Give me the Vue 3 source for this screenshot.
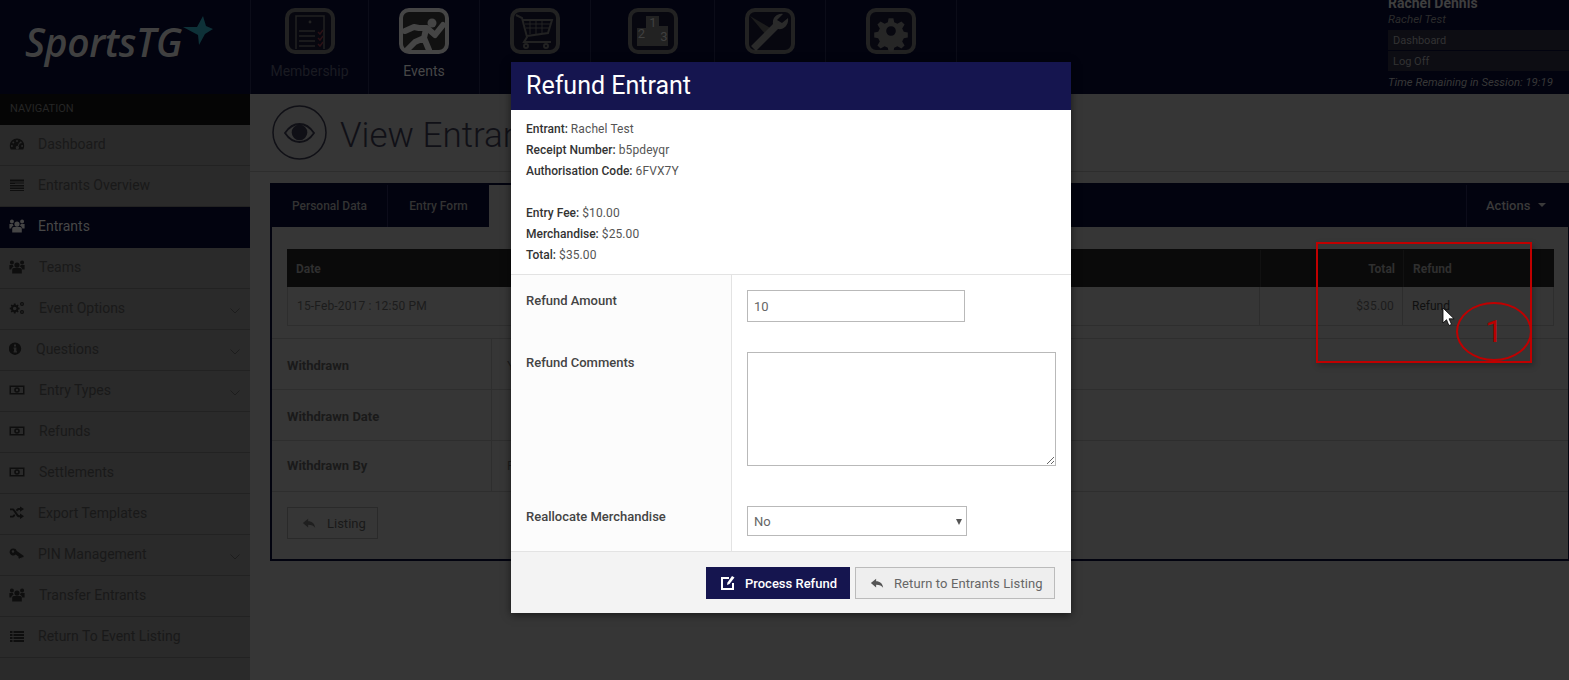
<script setup>
const topNav = [
  { key: 'membership', label: 'Membership', width: 118 },
  { key: 'events', label: 'Events', width: 111 },
  { key: 'cart', label: '', width: 111 },
  { key: 'podium', label: '', width: 124 },
  { key: 'wrench', label: '', width: 111 },
  { key: 'gear', label: '', width: 131 }
]
const icons = {
  gauge: 'M8 2.5a7.2 7.2 0 0 0-7.2 7.2c0 1.4.4 2.7 1 3.8h12.4c.6-1.1 1-2.4 1-3.8A7.2 7.2 0 0 0 8 2.5zM8 4a1 1 0 1 1 0 2 1 1 0 0 1 0-2zM4.3 5.5a1 1 0 1 1 0 2 1 1 0 0 1 0-2zM11.7 5.5a1 1 0 1 1 0 2 1 1 0 0 1 0-2zM2.9 9a1 1 0 1 1 0 2 1 1 0 0 1 0-2zM13.1 9a1 1 0 1 1 0 2 1 1 0 0 1 0-2zM10.2 6.6l.8.4-1.6 3.4a1.6 1.6 0 1 1-.8-.4z',
  overview: 'M1 2.5h14v2H1zM1 5.5h14v1H6v.5H1zM1 8h14v1.5H1zM1 10.5h14v1.5H1zM1 13h14v1H1z',
  users: 'M8 3.5a2.600 2.600 0 1 1 0 5.200 2.600 2.600 0 0 1 0-5.200zM2.900 1.500a2 2 0 1 1 0 4 2 2 0 0 1 0-4zM13.100 1.500a2 2 0 1 1 0 4 2 2 0 0 1 0-4zM4.800 9h6.400c.9 0 1.600.8 1.600 1.700v3.800H3.200v-3.800C3.200 9.800 3.900 9 4.800 9zM.4 6h3.400c.1.700.4 1.300.9 1.800-1.300.3-2.400 1.300-2.500 2.700H.4zM12.200 6h3.400v4.500h-2.300c-.1-1.400-1.200-2.400-2.500-2.700.5-.5.800-1.100.9-1.800z',
  cogs: 'M5.5 3.5l1 .1.3 1.300.8.4 1.200-.7.8.8-.7 1.200.4.8 1.300.3v1.600l-1.300.3-.4.8.7 1.200-.8.8-1.200-.7-.8.4-.3 1.300H4.900l-.3-1.300-.8-.4-1.200.7-.8-.8.7-1.200-.4-.8L.8 9.300V7.700l1.300-.3.4-.8-.7-1.200.8-.8 1.200.7.8-.4.3-1.300zM5.700 6.700a1.800 1.800 0 1 0 0 3.600 1.800 1.800 0 0 0 0-3.600zM13 2a2 2 0 1 1 0 4 2 2 0 0 1 0-4zM13 3.200a.8.800 0 1 0 0 1.600.8.800 0 0 0 0-1.600zM13 10a2 2 0 1 1 0 4 2 2 0 0 1 0-4zM13 11.200a.8.800 0 1 0 0 1.600.8.800 0 0 0 0-1.600z',
  info: 'M6 1.500a6.200 6.200 0 1 1 0 12.400 6.200 6.200 0 0 1 0-12.400zM5 3.500v2h2v-2zM4.500 6.500v1.200H5v2.600h-.5v1.200H8v-1.200h-.6v-3.800z',
  money: 'M.5 3.500h15v9H.5zM2 5v6h12V5zM8 5.200a2.800 2.800 0 1 1 0 5.600 2.800 2.800 0 0 1 0-5.600zM8 6.800a1.200 1.200 0 1 0 0 2.400 1.200 1.200 0 0 0 0-2.400z',
  shuffle: 'M1 3.500h2.500c1 0 1.600.5 2.200 1.300l3.400 4.700c.4.5.7.7 1.300.7H11V8.500l4 2.700-4 2.800v-1.700h-.8c-1.200 0-1.900-.5-2.500-1.400L4.300 6c-.3-.5-.5-.7-1-.7H1zM1 10.700h2.300c.5 0 .7-.2 1-.6l.8-1.100 1.100 1.500-.7 1c-.6.800-1.200 1-2.200 1H1zM8 6.400l-1.100-1.500.6-.7c.7-.8 1.400-1.200 2.500-1.200h1V1.500l4 2.500-4 2.700V5h-.9c-.5 0-.8.2-1.100.6z',
  key: 'M4.500 2.500a3.500 3.500 0 0 1 3.300 2.400l7 5.100-.8 1.500-1.100-.5-.7 1.300-1-.6-.7 1.100-1.200-.8.400-1.300-3-2.300A3.500 3.500 0 1 1 4.500 2.500zM4 4.200a1.300 1.300 0 1 0 0 2.600 1.300 1.300 0 0 0 0-2.600z',
  list: 'M1 3h2.500v2H1zM4.500 3H15v2H4.500zM1 6h2.500v2H1zM4.500 6H15v2H4.500zM1 9h2.500v2H1zM4.500 9H15v2H4.500zM1 12h2.500v2H1zM4.500 12H15v2H4.500z'
}
const navItems = [
  { label: 'Dashboard', icon: 'gauge', gap: 13 },
  { label: 'Entrants Overview', icon: 'overview', gap: 13 },
  { label: 'Entrants', icon: 'users', gap: 13, active: true },
  { label: 'Teams', icon: 'users', gap: 14 },
  { label: 'Event Options', icon: 'cogs', gap: 14, more: true },
  { label: 'Questions', icon: 'info', gap: 11, more: true },
  { label: 'Entry Types', icon: 'money', gap: 14, more: true },
  { label: 'Refunds', icon: 'money', gap: 14 },
  { label: 'Settlements', icon: 'money', gap: 14 },
  { label: 'Export Templates', icon: 'shuffle', gap: 13 },
  { label: 'PIN Management', icon: 'key', gap: 13, more: true },
  { label: 'Transfer Entrants', icon: 'users', gap: 14 },
  { label: 'Return To Event Listing', icon: 'list', gap: 13 }
]
const details = [
  { label: 'Withdrawn', value: 'Yes' },
  { label: 'Withdrawn Date', value: '' },
  { label: 'Withdrawn By', value: 'Rachel Dennis' }
]
const replyPath = 'M7 3v3c4.500 0 7.500 2.500 8 7.500C13.500 11 11 10 7 10v3L1 8z'
</script>

<template>
  <div class="page">
    <header class="top">
      <div class="logo">
        <span class="logo-text">SportsTG</span>
        <svg class="logo-star" width="32" height="32" viewBox="0 0 32 32"><path fill="#0e3138" d="M21 1L24 11 31 14 23 19 17 30 16 20 1 12 15 12z"/></svg>
      </div>
      <nav class="top-nav">
        <a v-for="item in topNav" :key="item.key" class="top-item" :class="{ on: item.key === 'events' }" :style="{ width: item.width + 'px' }">
          <svg class="top-icon" width="50" height="46" viewBox="0 0 50 46">
            <rect x="2" y="2" width="46" height="42" rx="8" :fill="item.key === 'events' ? '#111' : '#07070f'" :stroke="item.key === 'events' ? '#454545' : '#222'" stroke-width="4"/>
            <g v-if="item.key === 'membership'" fill="none" stroke="#222" stroke-width="1.500">
              <path d="M11 41V8h28v33"/>
              <path d="M14 23h16M14 28h16M14 33h16M14 38h16"/>
              <circle cx="25" cy="14" r=".7"/>
              <path d="M33 24l2 2 3-4M33 30l2 2 3-4M33 36l2 2 3-4" stroke="#2b1116"/>
            </g>
            <g v-else-if="item.key === 'events'">
              <circle cx="33" cy="15" r="4.500" fill="#454545"/>
              <path fill="none" stroke="#454545" stroke-width="6" stroke-linecap="round" stroke-linejoin="round" d="M6 23l9-4 5 1 8 0 8 7 8-10M27 21l-2 9 5 12M25 30L16 34 8 42"/>
            </g>
            <g v-else-if="item.key === 'cart'" fill="none" stroke="#222" stroke-width="2">
              <path d="M6 7l6 3 5 19-3 5h27M13 12h29l-4 13-21 3"/>
              <path d="M15 16h25M16 20h23M20 12v14M26 12v14M32 12v13" stroke-width="1"/>
              <circle cx="16" cy="38" r="2"/><circle cx="36" cy="38" r="2"/>
            </g>
            <g v-else-if="item.key === 'podium'">
              <path fill="#222" d="M18 8h13v10h9v20H9V20h9z"/>
              <text x="25" y="19" class="pod">1</text><text x="13.500" y="30" class="pod">2</text><text x="36" y="33" class="pod">3</text>
            </g>
            <g v-else-if="item.key === 'wrench'">
              <path fill="#1c1c1c" d="M5 8l22 13-6 6z"/>
              <path fill="#2a2a2a" d="M38 6c-6-1-11 4-10 10L6 38l5 5 22-22c6 1 11-4 10-11l-6 5-5-3z"/>
            </g>
            <path v-else fill="#262626" fill-rule="evenodd" d="M22 7h6l1 5 4 2 5-3 4 4-3 5 2 4 5 1v6l-5 1-2 4 3 5-4 4-5-3-4 2-1 5h-6l-1-5-4-2-5 3-4-4 3-5-2-4-5-1v-6l5-1 2-4-3-5 4-4 5 3 4-2zM25 17a6 6 0 1 0 0 12 6 6 0 0 0 0-12z" transform="translate(5 4.600) scale(.8)"/>
          </svg>
          <span class="top-label">{{ item.label }}</span>
        </a>
      </nav>
      <div class="account">
        <strong class="acc-name">Rachel Dennis</strong>
        <em class="acc-sub">Rachel Test</em>
        <a class="acc-link">Dashboard</a>
        <a class="acc-link">Log Off</a>
        <em class="acc-time">Time Remaining in Session: 19:19</em>
      </div>
    </header>

    <div class="body">
      <aside class="side">
        <div class="side-head">NAVIGATION</div>
        <a v-for="item in navItems" :key="item.label" class="side-item" :class="{ active: item.active }">
          <svg class="side-icon" width="16" height="16" viewBox="0 0 16 16"><path fill-rule="evenodd" :d="icons[item.icon]"/></svg>
          <span class="side-text" :style="{ marginLeft: item.gap + 'px' }">{{ item.label }}</span>
          <svg v-if="item.more" class="chev" width="10" height="6" viewBox="0 0 10 6"><path d="M.5.500L5 5 9.500.500" fill="none" stroke="#1d1d1d"/></svg>
        </a>
      </aside>

      <main class="main">
        <div class="title-bar">
          <svg width="55" height="55" viewBox="0 0 55 55" class="title-icon">
            <circle cx="27.500" cy="27.500" r="26.500" fill="none" stroke="#101016" stroke-width="1.500"/>
            <path fill="none" stroke="#101016" stroke-width="1.800" d="M13 28c4-6 9-9 14.500-9S38 22 42 28c-4 6-9 9-14.500 9S17 34 13 28z"/>
            <circle cx="27.500" cy="27.500" r="7.800" fill="#101016"/>
          </svg>
          <h1>View Entrant</h1>
        </div>

        <section class="panel">
          <div class="tabs">
            <a class="tab tab-first">Personal Data</a>
            <a class="tab tab-second">Entry Form</a>
            <a class="tab tab-active">Transactions</a>
            <a class="actions">Actions<i class="caret"></i></a>
          </div>
          <div class="table-wrap">
            <div class="t-row t-head">
              <div class="cell">Date</div>
              <div class="cell num">Total</div>
              <div class="cell">Refund</div>
            </div>
            <div class="t-row t-body">
              <div class="cell">15-Feb-2017 : 12:50 PM</div>
              <div class="cell num">$35.00</div>
              <div class="cell refund-link">Refund</div>
            </div>
          </div>
          <div v-for="d in details" :key="d.label" class="detail">
            <div class="d-label">{{ d.label }}</div>
            <div class="d-value">{{ d.value }}</div>
          </div>
          <div class="panel-foot">
            <a class="listing">
              <svg width="14" height="14" viewBox="0 0 16 16"><path fill="#1f1f1f" :d="replyPath"/></svg>
              Listing
            </a>
          </div>
        </section>
      </main>
    </div>

    <div class="note-box"></div>
    <div class="note-ring">1</div>
    <svg class="cursor" width="13" height="20" viewBox="0 0 13 20"><path fill="#fff" stroke="#000" stroke-width=".8" d="M1 1v15l3.500-3.300 2.400 5.800 2.600-1.100-2.400-5.600h5z"/></svg>

    <div class="modal" role="dialog">
      <h2 class="m-head">Refund Entrant</h2>
      <div class="m-info">
        <p><b>Entrant:</b> Rachel Test</p>
        <p><b>Receipt Number:</b> b5pdeyqr</p>
        <p><b>Authorisation Code:</b> 6FVX7Y</p>
        <p>&nbsp;</p>
        <p><b>Entry Fee:</b> $10.00</p>
        <p><b>Merchandise:</b> $25.00</p>
        <p><b>Total:</b> $35.00</p>
      </div>
      <div class="m-form">
        <div class="f-row r1">
          <label>Refund Amount</label>
          <div class="f-ctl"><input class="inp" type="text" value="10"></div>
        </div>
        <div class="f-row r2">
          <label>Refund Comments</label>
          <div class="f-ctl"><textarea class="area"></textarea></div>
        </div>
        <div class="f-row r3">
          <label>Reallocate Merchandise</label>
          <div class="f-ctl">
            <div class="sel-wrap">
              <select class="sel"><option>No</option><option>Yes</option></select>
            </div>
          </div>
        </div>
      </div>
      <div class="m-foot">
        <button class="btn primary" type="button">
          <svg width="16" height="16" viewBox="0 0 16 16"><path fill="none" stroke="#fff" stroke-width="2" d="M9 3H2v11h11V8"/><path fill="#fff" d="M12 1l2.500 1.500L9.500 9 7 10l.5-2.500z"/></svg>
          Process Refund
        </button>
        <button class="btn plain" type="button">
          <svg width="14" height="14" viewBox="0 0 16 16"><path fill="#555" :d="replyPath"/></svg>
          Return to Entrants Listing
        </button>
      </div>
    </div>
  </div>
</template>

<style>
html, body { margin: 0; background: #363636; }
</style>

<style scoped>
* { box-sizing: border-box; }
.page { position: relative; width: 1569px; height: 680px; overflow: hidden; background: #363636; font-family: Roboto, "Liberation Sans", sans-serif; font-size: 13px; color: #222; }
.top { display: flex; height: 94px; background: #02030f; }
.logo { position: relative; width: 251px; flex: none; border-right: 1px solid #0b0c18; }
.logo-text { position: absolute; left: 25px; top: 17px; font-family: "Open Sans", sans-serif; font-style: italic; font-weight: 600; font-size: 39px; line-height: 50px; letter-spacing: -.4px; color: #404040; }
.logo-star { position: absolute; left: 182px; top: 15px; }
.top-nav { display: flex; }
.top-item { display: flex; flex-direction: column; align-items: center; flex: none; height: 94px; padding-top: 8px; border-right: 1px solid #0b0c18; }
.top-icon { display: block; }
.top-label { margin-top: 6px; font-size: 14px; line-height: 22px; color: #1a1b22; }
.top-item.on .top-label { color: #474747; }
.pod { font: 13px Roboto, sans-serif; fill: #404040; text-anchor: middle; }
.account { position: absolute; left: 1388px; top: -5px; right: 0; display: flex; flex-direction: column; }
.acc-name { font-size: 14px; line-height: 16px; color: #3f3f3f; font-weight: 700; }
.acc-sub { margin-top: 1px; font-size: 11.600px; line-height: 15px; color: #2c2c2c; margin-bottom: 3px; }
.acc-link { height: 20px; margin-bottom: 1px; padding-left: 5px; background: #0d0d13; font-size: 11px; line-height: 22px; color: #333; }
.acc-time { margin-top: 3px; font-size: 11.300px; line-height: 15px; color: #383838; }

.body { display: flex; height: 586px; }
.side { width: 250px; flex: none; background: #2a2a2a; }
.side-head { height: 31px; padding-left: 10px; background: #050505; color: #262626; font-size: 11px; line-height: 29px; }
.side-item { display: flex; align-items: center; height: 41px; padding-left: 9px; border-bottom: 1px solid #222; font-size: 14px; color: #191919; position: relative; }
.side-text { margin-top: -2px; }
.side-item.active { background: #02030f; color: #474747; border-bottom-color: #02030f; }
.side-icon { flex: none; fill: #0e0e0e; margin-top: -2px; }
.side-item.active .side-icon { fill: #454545; }
.chev { position: absolute; left: 230px; top: 19px; }

.main { flex: 1; min-width: 0; }
.title-bar { display: flex; align-items: center; height: 78px; padding-left: 22px; border-bottom: 1px solid #2d2d2d; }
.title-icon { flex: none; }
.title-bar h1 { margin: 6px 0 0 13px; font-size: 35px; font-weight: 300; color: #101016; white-space: nowrap; }
.panel { margin: 11px 0 0 20px; height: 378px; border: 2px solid #02030f; border-right-width: 1px; }
.tabs { display: flex; height: 42px; background: #02030f; font-size: 12px; font-weight: 500; color: #333; }
.tab { display: flex; align-items: center; justify-content: center; border-right: 1px solid #0c0c1a; }
.tab-first { width: 116px; }
.tab-second { width: 101px; border-right: 0; }
.tab-active { width: 120px; background: #363636; color: #222; }
.actions { display: flex; align-items: center; margin-left: auto; width: 102px; padding: 0 0 2px 19px; border-left: 1px solid #0c0c1a; font-size: 13px; color: #3a3a3a; }
.caret { margin-left: 8px; border: 4px solid transparent; border-top-color: #3a3a3a; border-bottom: 0; }
.table-wrap { margin: 22px 14px 12px 15px; }
.t-row { display: grid; grid-template-columns: 1fr 143px 150px; }
.t-head { height: 38px; padding-top: 1px; background: #0a0a0a; color: #2f2f2f; font-size: 12px; font-weight: 700; }
.t-body { height: 39px; border: 1px solid #2e2e2e; border-top: 0; color: #1c1c1c; font-size: 12px; letter-spacing: .15px; }
.cell { display: flex; align-items: center; padding: 0 8px 0 9px; border-right: 1px solid #2d2d2d; }
.t-head .cell { border-right-color: #111; }
.cell:last-child { border-right: 0; }
.num { justify-content: flex-end; }
.refund-link { color: #101010; letter-spacing: 0; }
.detail { display: grid; grid-template-columns: 220px 1fr; height: 51px; border-top: 1px solid #2e2e2e; font-size: 13px; }
.detail:nth-child(5) > div { padding-top: 0; padding-bottom: 2px; }
.d-label { display: flex; align-items: center; padding: 2px 0 0 15px; font-weight: 700; color: #1a1a1a; border-right: 1px solid #2e2e2e; }
.d-value { display: flex; align-items: center; padding: 2px 0 0 15px; color: #1c1c1c; white-space: nowrap; }
.panel-foot { padding: 15px; border-top: 1px solid #2e2e2e; }
.listing { display: flex; align-items: center; gap: 11px; width: 91px; height: 32px; padding-left: 14px; border: 1px solid #2a2a2a; font-size: 13px; color: #191919; }

.note-box { position: absolute; left: 1316px; top: 242px; width: 216px; height: 121px; border: 2px solid #c00000; box-shadow: 2px 3px 6px rgba(0,0,0,.25); }
.note-ring { position: absolute; left: 1456px; top: 302px; width: 76px; height: 59px; border: 2px solid #c00000; border-radius: 50%; color: #b80000; font-family: Roboto, sans-serif; font-size: 31px; line-height: 55px; text-align: center; }
.cursor { position: absolute; left: 1442px; top: 307px; }

.modal { position: absolute; left: 511px; top: 62px; width: 560px; height: 551px; display: flex; flex-direction: column; background: #fff; box-shadow: 0 2px 8px rgba(0,0,0,.55); }
.m-head { flex: none; height: 48px; margin: 0; padding: 0 15px; background: #15154f; color: #fff; font-size: 25px; font-weight: 400; line-height: 48px; }
.m-info { flex: none; height: 164px; padding: 9px 15px 0; font-size: 12px; line-height: 21px; color: #555; letter-spacing: .1px; }
.m-info p { margin: 0; }
.m-info b { font-weight: 500; color: #333; letter-spacing: 0; }
.m-form { flex: none; height: 277px; border-top: 1px solid #e3e3e3; background: linear-gradient(to right, #fcfcfc 220px, #e3e3e3 220px, #e3e3e3 221px, #fff 221px); }
.f-row { display: grid; grid-template-columns: 221px 1fr; }
.f-row label { padding: 1px 0 0 15px; font-size: 13px; font-weight: 500; line-height: 20px; color: #444; }
.f-ctl { padding-left: 15px; padding-right: 14px; }
.r1 { padding-top: 15px; padding-bottom: 15px; }
.r2 { padding-top: 15px; padding-bottom: 15px; }
.r3 { padding-top: 25px; }
.inp { display: block; width: 218px; height: 32px; padding: 0 6px; border: 1px solid #b9b9b9; font: 13px Roboto, sans-serif; color: #666; outline: 0; }
.area { display: block; width: 309px; height: 114px; margin: 0; border: 1px solid #b9b9b9; outline: 0; }
.sel-wrap { position: relative; width: 220px; }
.sel-wrap::after { content: ""; position: absolute; right: 5px; top: 13px; border: 3.500px solid transparent; border-top: 6px solid #555; border-bottom: 0; pointer-events: none; }
.sel { display: block; width: 220px; height: 30px; padding: 0 6px; appearance: none; border: 1px solid #b9b9b9; border-radius: 0; background: #fff; font: 13px Roboto, sans-serif; color: #666; outline: 0; }
.m-foot { display: flex; flex: none; justify-content: flex-end; gap: 5px; height: 62px; padding: 15px 16px 0 15px; border-top: 1px solid #e3e3e3; background: #f3f3f3; }
.btn { display: flex; align-items: center; height: 32px; margin: 0; border: 0; border-radius: 0; font: 13px Roboto, sans-serif; }
.primary { width: 144px; padding-left: 14px; gap: 9px; background: #15154f; color: #fff; font-weight: 500; }
.plain { width: 200px; padding-left: 14px; gap: 10px; background: #eee; border: 1px solid #bbb; color: #666; letter-spacing: .1px; }
</style>
